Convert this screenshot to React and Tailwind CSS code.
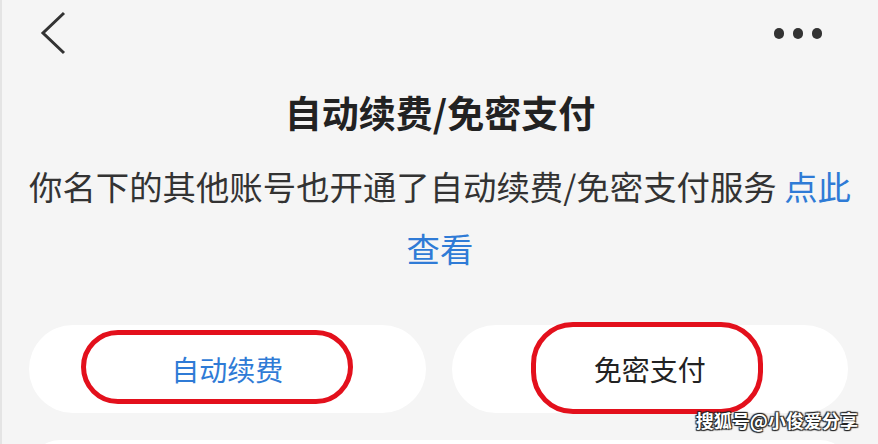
import React from 'react';

const font = { fontFamily: '"Noto Sans CJK SC", "Noto Sans", sans-serif' };

const App = () => {
    return (
        <div className="w-[878px] h-[444px] overflow-hidden bg-[#f5f5f5] relative border-l-2 border-[#e4e4e4]" style={font}>
            {/* Top bar */}
            <div className="h-[66px] flex items-center justify-between pl-[36px] pr-[56px]">
                <svg width="30" height="46" viewBox="0 0 30 46">
                    <path d="M26 3 L5 23 L26 43" fill="none" stroke="#333" strokeWidth="3" strokeLinejoin="miter" />
                </svg>
                <div className="flex items-center gap-[9px]">
                    <span className="w-[10px] h-[11px] rounded-full bg-[#333]"></span>
                    <span className="w-[10px] h-[11px] rounded-full bg-[#333]"></span>
                    <span className="w-[10px] h-[11px] rounded-full bg-[#333]"></span>
                </div>
            </div>

            {/* Title */}
            <h1 className="mt-[21px] text-center text-[37px] leading-[50px] font-bold text-[#222]">
                自动续费/免密支付
            </h1>

            {/* Description */}
            <p className="mt-[18px] px-[18px] text-center text-[33.4px] leading-[62px] text-[#333]">
                你名下的其他账号也开通了自动续费/免密支付服务 <span className="text-[#2f7bd6]">点此查看</span>
            </p>

            {/* Buttons */}
            <div className="mt-[46px] pl-[27px] pr-[30px] grid grid-cols-2 gap-[26px]">
                <div className="relative h-[88px] rounded-full bg-white flex items-center justify-center text-[28px] text-[#2f7bd6]">
                    自动续费
                    <div className="absolute left-[52px] top-[5px] w-[272px] h-[74px] rounded-[38px] border-[5px] border-[#e3101c]"></div>
                </div>
                <div className="relative h-[88px] rounded-full bg-white flex items-center justify-center text-[28px] text-[#222]">
                    免密支付
                    <div className="absolute left-[79px] top-[-3px] w-[232px] h-[92px] rounded-[42px] border-[5px] border-[#e3101c]"></div>
                </div>
            </div>

            {/* Next card */}
            <div className="mt-[27px] mx-[28px] h-[40px] rounded-t-[30px] bg-white"></div>

            {/* Watermark */}
            <div
                className="absolute right-[20px] top-[411px] text-[18px] font-bold text-white leading-none"
                style={{ textShadow: '1px 1px 1px #222, -1px -1px 1px #222, 1px -1px 1px #222, -1px 1px 1px #222' }}
            >
                搜狐号@小俊爱分享
            </div>
        </div>
    );
};

export default App;
